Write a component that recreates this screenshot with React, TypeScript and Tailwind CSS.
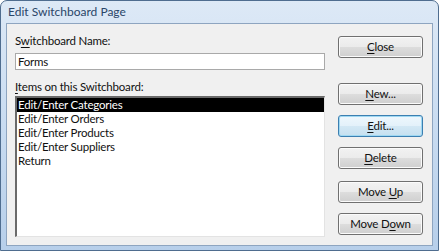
import React from 'react';

const FONT = { fontFamily: 'Lato, "Noto Sans", Arial, sans-serif' };

const items = [
  'Edit/Enter Categories',
  'Edit/Enter Orders',
  'Edit/Enter Products',
  'Edit/Enter Suppliers',
  'Return',
];

interface DialogButtonProps {
  pre?: string;
  u: string;
  post?: string;
  focused?: boolean;
  className?: string;
}

const DialogButton: React.FC<DialogButtonProps> = ({ pre = '', u, post = '', focused = false, className = '' }) => (
  <button
    className={`flex h-[22px] w-[85px] items-center justify-center rounded-[3px] border text-[11.5px] leading-none tracking-[-0.2px] text-[#111] ${
      focused
        ? 'border-[#3c7fb1] bg-[linear-gradient(to_bottom,#eef7fd_0%,#e3f1fa_50%,#d3e8f5_50%,#c6e0f0_100%)] shadow-[inset_0_0_0_1px_#9fd8f2]'
        : 'border-[#707070] bg-[linear-gradient(to_bottom,#f2f2f2_0%,#ebebeb_50%,#dddddd_50%,#cfcfcf_100%)] shadow-[inset_0_0_0_1px_#fbfbfb]'
    } ${className}`}
  >
    <span>
      {pre}
      <span className="underline underline-offset-2">{u}</span>
      {post}
    </span>
  </button>
);

export default function App() {
  return (
    <div className="h-[251px] w-[439px] bg-white" style={FONT}>
      <div className="flex h-[251px] w-[439px] flex-col rounded-t-[7px] border border-[#4f6d8f] bg-gradient-to-b from-[#dde9f6] via-[#c9dcf1] to-[#b7cfea] px-[5px] pb-[4px]">
        {/* Title bar */}
        <div className="flex h-[22px] items-center pl-[2px] text-[12px] text-[#2a4668]">Edit Switchboard Page</div>

        {/* Body */}
        <div className="flex flex-1 border border-[#8ea5c0] bg-[#f0f0f0]">
          <div className="ml-[8px] flex w-[310px] flex-col text-[11.5px] tracking-[-0.2px] text-[#111]">
            <div className="mt-[9px] leading-[15px]">
              S<span className="underline underline-offset-2">w</span>itchboard Name:
            </div>
            <div className="mt-[5px] h-[17px] border border-[#a9a9a9] bg-white pl-[2px] leading-[15px]">Forms</div>
            <div className="mt-[9px] leading-[15px]">
              <span className="underline underline-offset-2">I</span>tems on this Switchboard:
            </div>
            <div className="mt-[2px] h-[141px] border-t-2 border-l-2 border-r border-b border-t-[#6a6a6a] border-l-[#6a6a6a] border-r-[#e3e3e3] border-b-[#e3e3e3] bg-white">
              {items.map((item, i) => (
                <div
                  key={item}
                  className={`h-[14px] overflow-hidden pl-[1px] leading-[14px] ${i === 0 ? 'bg-black text-white' : 'text-[#111]'}`}
                >
                  {item}
                </div>
              ))}
            </div>
          </div>

          <div className="ml-[13px] flex flex-col">
            <DialogButton u="C" post="lose" className="mt-[12px]" />
            <DialogButton u="N" post="ew..." className="mt-[25px]" />
            <DialogButton u="E" post="dit..." focused className="mt-[10px]" />
            <DialogButton u="D" post="elete" className="mt-[10px]" />
            <DialogButton pre="Move " u="U" post="p" className="mt-[12px]" />
            <DialogButton pre="Move D" u="o" post="wn" className="mt-[10px]" />
          </div>
        </div>
      </div>
    </div>
  );
}
